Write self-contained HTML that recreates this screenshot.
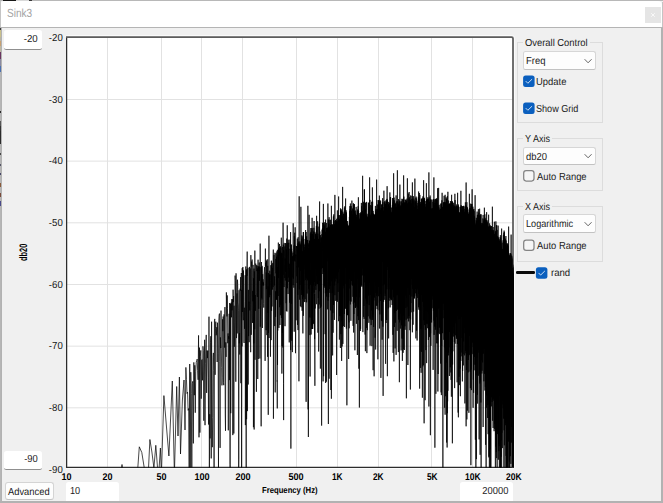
<!DOCTYPE html>
<html lang="en"><head><meta charset="utf-8"><title>Sink3</title><style>
html,body{margin:0;padding:0}
body{width:663px;height:503px;overflow:hidden;background:#f0f0f0;position:relative;font-family:"Liberation Sans", Arial, sans-serif}
.b{position:absolute;display:block}
.t{position:absolute;display:inline-block;white-space:nowrap;font-family:"Liberation Sans", Arial, sans-serif}
.edit{position:absolute;box-sizing:border-box;background:#fff;border:0 solid #fff;border-bottom:1px solid #8f8f8f;border-radius:2.5px}
.combo{position:absolute;box-sizing:border-box;background:#fdfdfd;border:1px solid #d6d6d6;border-bottom-color:#c2c2c2;border-radius:2.5px}
.btn{position:absolute;box-sizing:border-box;background:#fdfdfd;border:1px solid #d4d4d4;border-bottom-color:#c4c4c4;border-radius:3px}
.gb{position:absolute;box-sizing:border-box;border:1px solid #dcdcdc}
</style></head><body>
<div class="sec" id="window-frame">
<div class="b" style="left:0px;top:0px;width:663px;height:1px;background:#b8b8b8"></div>
<div class="b" style="left:3px;top:0px;width:13px;height:1px;background:#161616"></div>
<div class="b" style="left:16px;top:0px;width:13px;height:1px;background:#d9d9d9"></div>
<div class="b" style="left:29px;top:0px;width:3px;height:1px;background:#3a3a3a"></div>
<div class="b" style="left:1px;top:1px;width:661px;height:26px;background:#fff;border-radius:3px 4px 0 0"></div>
<div class="b" style="left:0px;top:27px;width:663px;height:1px;background:#b4b4b4"></div>
<div class="b" style="left:0px;top:1px;width:1px;height:26px;background:#c4c4c4"></div>
<div class="b" style="left:662px;top:2px;width:1px;height:25px;background:#c4c4c4"></div>
<div class="b" style="left:0px;top:28px;width:1px;height:475px;background:#b6b6b6"></div>
<div class="b" style="left:0px;top:28px;width:1px;height:2px;background:#3a3a3a"></div>
<div class="b" style="left:0px;top:30px;width:1px;height:7px;background:#c9c08a"></div>
<div class="b" style="left:0px;top:37px;width:1px;height:4px;background:#b9b4a4"></div>
<div class="b" style="left:0px;top:41px;width:1px;height:5px;background:#c8a070"></div>
<div class="b" style="left:0px;top:46px;width:1px;height:6px;background:#bdb6a0"></div>
<div class="b" style="left:0px;top:52px;width:1px;height:7px;background:#6a3560"></div>
<div class="b" style="left:0px;top:59px;width:1px;height:7px;background:#8a8aa0"></div>
<div class="b" style="left:0px;top:66px;width:1px;height:6px;background:#4a70b0"></div>
<div class="b" style="left:0px;top:111px;width:1px;height:2px;background:#2a2a2a"></div>
<div class="b" style="left:0px;top:121px;width:1px;height:5px;background:#555"></div>
<div class="b" style="left:0px;top:126px;width:1px;height:5px;background:#333"></div>
<div class="b" style="left:0px;top:131px;width:1px;height:13px;background:#2b2b2b"></div>
<div class="b" style="left:0px;top:153px;width:1px;height:2px;background:#444"></div>
<div class="b" style="left:0px;top:164px;width:1px;height:2px;background:#556"></div>
<div class="b" style="left:0px;top:173px;width:1px;height:2px;background:#446"></div>
<div class="b" style="left:0px;top:183px;width:1px;height:4px;background:#8a5a3a"></div>
<div class="b" style="left:0px;top:193px;width:1px;height:4px;background:#7a4a3a"></div>
<div class="b" style="left:0px;top:201px;width:1px;height:5px;background:#4a4a8a"></div>
<div class="b" style="left:1px;top:28px;width:1px;height:475px;background:#b2b2b2"></div>
<div class="b" style="left:661px;top:28px;width:2px;height:475px;background:#b2b2b2"></div>
<div class="b" style="left:0px;top:500.6px;width:663px;height:2.3999999999999773px;background:#b2b2b2;z-index:5"></div>
<span class="t" style="left:7.40px;top:8.40px;font-size:11.8px;line-height:11.8px;font-weight:400;color:#a3a3a3;transform-origin:0 0;transform:rotate(0.03deg) scaleX(0.8538);">Sink3</span>
<div class="b" style="left:645px;top:7px;width:16px;height:16px;background:#e5e5e5"></div>
<svg class="b" style="left:649px;top:11px" width="8" height="8" viewBox="0 0 8 8"><path d="M2.2 2.2 L5.8 5.8 M5.8 2.2 L2.2 5.8" stroke="#fafafa" stroke-width="0.9" fill="none"/></svg>
</div>
<div class="sec" id="range-controls">
<div class="edit" style="left:3.8px;top:30.2px;width:38.0px;height:19.8px"></div>
<span class="t" style="right:625.40px;top:33.70px;font-size:10.2px;line-height:10.2px;font-weight:400;color:#1b1b1b;transform-origin:100% 0;transform:rotate(0.03deg) scaleX(0.9502);">-20</span>
<div class="edit" style="left:3.8px;top:450.8px;width:38.0px;height:19.19999999999999px"></div>
<span class="t" style="right:625.60px;top:453.70px;font-size:10.2px;line-height:10.2px;font-weight:400;color:#1b1b1b;transform-origin:100% 0;transform:rotate(0.03deg) scaleX(0.9230);">-90</span>
<div class="btn" style="left:4.5px;top:482.2px;width:49.5px;height:18px"></div>
<span class="t" style="left:8.00px;top:486.70px;font-size:10.2px;line-height:10.2px;font-weight:400;color:#1b1b1b;transform-origin:0 0;transform:rotate(0.03deg) scaleX(0.9181);">Advanced</span>
<div class="edit" style="left:66.1px;top:481.8px;width:52.5px;height:21.19999999999999px"></div>
<span class="t" style="left:70.40px;top:485.70px;font-size:10.2px;line-height:10.2px;font-weight:400;color:#1b1b1b;transform-origin:0 0;transform:rotate(0.03deg) scaleX(0.8992);">10</span>
<div class="edit" style="left:460.4px;top:481.8px;width:52.80000000000007px;height:21.19999999999999px"></div>
<span class="t" style="right:154.40px;top:485.70px;font-size:10.2px;line-height:10.2px;font-weight:400;color:#1b1b1b;transform-origin:100% 0;transform:rotate(0.03deg) scaleX(0.9173);">20000</span>
</div>
<div class="sec" id="side-panel">
<div class="gb" style="left:517px;top:42px;width:86px;height:81px"></div><div class="b" style="left:523px;top:40px;width:66.6px;height:4px;background:#f0f0f0"></div><span class="t" style="left:524.60px;top:37.70px;font-size:10.2px;line-height:10.2px;font-weight:400;color:#1b1b1b;transform-origin:0 0;transform:rotate(0.03deg) scaleX(0.9212);">Overall Control</span>
<div class="combo" style="left:523.3px;top:51px;width:72.30000000000007px;height:19px"></div><span class="t" style="left:525.90px;top:55.70px;font-size:10.2px;line-height:10.2px;font-weight:400;color:#1b1b1b;transform-origin:0 0;transform:rotate(0.03deg) scaleX(0.9259);">Freq</span><svg class="b" style="left:583.3000000000001px;top:56.5px" width="10" height="8" viewBox="0 0 10 8"><path d="M1.9 2.5 L5.1 5.8 L8.3 2.5" fill="none" stroke="#666" stroke-width="1.0" stroke-linecap="round" stroke-linejoin="round"/></svg>
<svg class="b" style="left:522px;top:74px" width="15" height="15" viewBox="0 0 15 15"><rect x="1.10" y="1.50" width="11.5" height="11.5" rx="2.5" fill="#0a5fbe"/><path d="M4.00 7.40 L5.85 9.25 L9.80 5.40" fill="none" stroke="#d3e3f4" stroke-width="0.95" stroke-linecap="round" stroke-linejoin="round"/></svg>
<span class="t" style="left:536.00px;top:76.70px;font-size:10.2px;line-height:10.2px;font-weight:400;color:#1b1b1b;transform-origin:0 0;transform:rotate(0.03deg) scaleX(0.9252);">Update</span>
<svg class="b" style="left:522px;top:101px" width="15" height="15" viewBox="0 0 15 15"><rect x="1.10" y="1.50" width="11.5" height="11.5" rx="2.5" fill="#0a5fbe"/><path d="M4.00 7.40 L5.85 9.25 L9.80 5.40" fill="none" stroke="#d3e3f4" stroke-width="0.95" stroke-linecap="round" stroke-linejoin="round"/></svg>
<span class="t" style="left:536.00px;top:103.70px;font-size:10.2px;line-height:10.2px;font-weight:400;color:#1b1b1b;transform-origin:0 0;transform:rotate(0.03deg) scaleX(0.8915);">Show Grid</span>
<div class="gb" style="left:517px;top:138px;width:86px;height:53px"></div><div class="b" style="left:523px;top:136px;width:29.0px;height:4px;background:#f0f0f0"></div><span class="t" style="left:524.60px;top:133.70px;font-size:10.2px;line-height:10.2px;font-weight:400;color:#1b1b1b;transform-origin:0 0;transform:rotate(0.03deg) scaleX(0.8889);">Y Axis</span>
<div class="combo" style="left:523.3px;top:147px;width:72.30000000000007px;height:18px"></div><span class="t" style="left:525.90px;top:151.70px;font-size:10.2px;line-height:10.2px;font-weight:400;color:#1b1b1b;transform-origin:0 0;transform:rotate(0.03deg) scaleX(0.9263);">db20</span><svg class="b" style="left:583.3000000000001px;top:152.0px" width="10" height="8" viewBox="0 0 10 8"><path d="M1.9 2.5 L5.1 5.8 L8.3 2.5" fill="none" stroke="#666" stroke-width="1.0" stroke-linecap="round" stroke-linejoin="round"/></svg>
<svg class="b" style="left:522px;top:169px" width="15" height="15" viewBox="0 0 15 15"><rect x="1.70" y="1.70" width="10.3" height="10.3" rx="2.4" fill="#f6f6f6" stroke="#848484" stroke-width="1.25"/></svg>
<span class="t" style="left:536.70px;top:171.70px;font-size:10.2px;line-height:10.2px;font-weight:400;color:#1b1b1b;transform-origin:0 0;transform:rotate(0.03deg) scaleX(0.9217);">Auto Range</span>
<div class="gb" style="left:517px;top:206px;width:86px;height:56px"></div><div class="b" style="left:523px;top:204px;width:29.0px;height:4px;background:#f0f0f0"></div><span class="t" style="left:524.60px;top:201.70px;font-size:10.2px;line-height:10.2px;font-weight:400;color:#1b1b1b;transform-origin:0 0;transform:rotate(0.03deg) scaleX(0.8830);">X Axis</span>
<div class="combo" style="left:523.3px;top:214px;width:72.30000000000007px;height:19px"></div><span class="t" style="left:525.90px;top:218.70px;font-size:10.2px;line-height:10.2px;font-weight:400;color:#1b1b1b;transform-origin:0 0;transform:rotate(0.03deg) scaleX(0.8961);">Logarithmic</span><svg class="b" style="left:583.3000000000001px;top:219.5px" width="10" height="8" viewBox="0 0 10 8"><path d="M1.9 2.5 L5.1 5.8 L8.3 2.5" fill="none" stroke="#666" stroke-width="1.0" stroke-linecap="round" stroke-linejoin="round"/></svg>
<svg class="b" style="left:522px;top:238px" width="15" height="15" viewBox="0 0 15 15"><rect x="1.70" y="2.10" width="10.3" height="10.3" rx="2.4" fill="#f6f6f6" stroke="#848484" stroke-width="1.25"/></svg>
<span class="t" style="left:536.70px;top:240.70px;font-size:10.2px;line-height:10.2px;font-weight:400;color:#1b1b1b;transform-origin:0 0;transform:rotate(0.03deg) scaleX(0.9217);">Auto Range</span>
<div class="b" style="left:515.6px;top:271.2px;width:19.4px;height:2.6px;background:#0a0a0a;border-radius:1.3px"></div>
<svg class="b" style="left:534px;top:266px" width="15" height="15" viewBox="0 0 15 15"><rect x="1.90" y="1.30" width="11.5" height="11.5" rx="2.5" fill="#0a5fbe"/><path d="M4.80 7.20 L6.65 9.05 L10.60 5.20" fill="none" stroke="#d3e3f4" stroke-width="0.95" stroke-linecap="round" stroke-linejoin="round"/></svg>
<span class="t" style="left:551.00px;top:267.70px;font-size:10.2px;line-height:10.2px;font-weight:400;color:#1b1b1b;transform-origin:0 0;transform:rotate(0.03deg) scaleX(0.9416);">rand</span>
</div>
<div class="sec" id="plot">
<svg class="b" style="left:0;top:0" width="663" height="503" viewBox="0 0 663 503"><rect x="67" y="37" width="446" height="430" fill="#fff"/><path d="M107.5 37V467M161.5 37V467M201.5 37V467M242.5 37V467M296.5 37V467M337.5 37V467M378.5 37V467M431.5 37V467M472.5 37V467M67 99.47H513M67 161.14H513M67 222.81H513M67 284.48H513M67 346.15H513M67 407.82H513" stroke="#e2e2e2" stroke-width="1" fill="none"/><rect x="65.5" y="35.5" width="449" height="433" rx="2" fill="none" stroke="#fafafa" stroke-width="1"/><path d="M66.6 37V467.3H513" fill="none" stroke="#2c2c2c" stroke-width="1.3"/><path d="M66 37H511.5Q513 37 513 38.5V468" fill="none" stroke="#5c5c5c" stroke-width="1.75"/><clipPath id="pc"><rect x="67.2" y="37.8" width="446.3" height="429.6"/></clipPath><g clip-path="url(#pc)"><path d="M60.00,475.0 120.50,475.0 122.00,464.5 123.50,475.0 137.30,475.0 139.30,446.8 141.80,452.5 144.60,470.0 146.20,475.0 148.20,475.0 149.90,439.5 151.90,452.0 153.90,468.0 155.80,445.3 157.70,470.0 159.00,470.0 160.40,448.0 161.40,475.0 163.90,395.6 168.90,456.0 172.30,381.0 174.40,475.0 176.70,386.5 178.00,436.0 179.40,377.0 180.50,454.0 182.40,400.0 184.00,380.0 185.00,430.0 185.89,367.4 186.46,379.6 187.01,393.5 187.57,392.2 188.11,410.4 188.65,408.5 189.19,475.0 189.72,364.0 190.25,475.0 190.77,372.2 191.29,393.5 191.81,475.0 192.31,383.7 192.82,381.3 193.32,443.4 193.82,362.4 194.31,395.2 194.80,365.3 195.28,412.7 195.76,371.7 196.24,362.2 196.71,360.7 197.18,359.1 197.64,370.4 198.10,379.8 198.56,335.4 199.01,437.3 199.47,347.6 199.91,432.6 200.36,356.2 200.80,350.4 201.23,398.7 201.67,360.0 202.10,359.5 202.53,380.3 202.95,346.3 203.37,350.7 203.79,420.7 204.21,378.9 204.62,339.8 205.03,425.2 205.44,363.9 205.84,346.0 206.24,334.9 206.64,392.9 207.04,350.5 207.43,358.1 207.82,350.7 208.21,377.2 208.59,424.5 208.98,316.7 209.36,475.0 209.74,414.2 210.11,438.4 210.49,342.2 210.86,336.2 211.22,458.4 211.59,321.7 211.96,418.7 212.32,447.2 212.68,417.5 213.03,357.5 213.39,352.9 213.74,370.6 214.09,475.0 214.44,320.9 214.79,318.9 215.13,374.8 215.48,328.7 215.82,321.7 216.16,335.3 216.49,333.0 216.83,327.2 217.16,362.0 217.49,322.7 217.82,332.2 218.15,353.8 218.48,473.0 218.80,320.2 219.12,315.1 219.44,313.6 219.76,361.5 220.08,447.9 220.39,337.4 220.71,348.1 221.02,310.6 221.33,348.9 221.64,367.3 221.95,385.4 222.25,377.9 222.56,319.3 222.86,331.2 223.16,316.5 223.46,382.5 223.76,385.2 224.05,314.4 224.35,338.6 224.64,347.6 224.93,307.1 225.22,413.9 225.51,430.8 225.80,342.3 226.08,356.9 226.37,292.4 226.65,307.2 226.93,316.4 227.22,295.4 227.49,308.4 227.77,343.2 228.05,333.4 228.32,430.3 228.60,336.2 228.87,338.9 229.14,313.8 229.41,380.1 229.68,303.0 229.95,464.6 230.22,475.0 230.48,303.7 230.75,413.2 231.01,317.9 231.27,302.6 231.53,317.3 231.79,299.1 232.05,310.3 232.31,305.1 232.56,299.2 232.82,435.1 233.07,289.7 233.33,302.1 233.58,296.1 233.83,433.5 234.08,305.7 234.33,346.7 234.58,336.1 234.82,322.2 235.07,275.6 235.31,280.4 235.56,294.0 235.80,381.7 236.04,273.3 236.28,279.7 236.52,338.1 236.76,328.2 237.00,293.4 237.23,333.4 237.47,279.7 237.70,284.4 237.94,303.0 238.17,304.3 238.40,310.8 238.63,475.0 238.86,459.8 239.09,290.2 239.32,343.3 239.55,333.1 239.77,354.5 240.00,288.8 240.22,289.2 240.45,290.6 240.67,277.1 240.89,383.2 241.12,285.6 241.34,273.0 241.56,475.0 241.78,289.9 241.99,346.5 242.21,268.2 242.43,278.1 242.64,312.0 242.86,267.0 243.07,316.5 243.29,320.2 243.50,270.5 243.71,309.9 243.92,341.9 244.13,343.0 244.34,307.7 244.55,328.8 244.76,318.0 244.97,301.7 245.17,275.2 245.38,425.1 245.58,343.2 245.79,266.5 245.99,390.0 246.20,475.0 246.40,270.1 246.60,419.2 246.80,269.1 247.00,275.8 247.20,251.6 247.40,411.1 247.60,340.7 247.80,333.9 247.99,267.7 248.19,384.5 248.38,289.9 248.58,336.1 248.77,327.5 248.97,301.7 249.16,342.2 249.35,295.1 249.55,266.9 249.74,310.4 249.93,291.4 250.12,268.4 250.31,269.9 250.50,304.1 250.68,352.2 250.87,255.1 251.06,274.2 251.24,334.8 251.43,310.9 251.62,261.6 251.80,266.5 251.98,260.6 252.17,259.6 252.35,276.9 252.53,322.9 252.71,290.9 252.90,301.3 253.08,264.9 253.26,292.8 253.44,427.2 253.62,278.3 253.79,343.4 253.97,268.6 254.15,429.5 254.33,271.4 254.50,287.4 254.68,329.1 254.85,250.6 255.03,359.8 255.20,295.0 255.38,309.9 255.55,310.7 255.72,263.6 255.89,266.2 256.07,266.2 256.24,344.8 256.41,391.8 256.58,292.1 256.75,265.0 256.92,271.1 257.09,266.1 257.25,294.9 257.42,296.9 257.59,268.3 257.76,379.0 257.92,268.4 258.09,259.7 258.25,359.0 258.42,266.9 258.58,274.6 258.75,308.8 258.91,266.0 259.07,271.0 259.24,262.5 259.40,280.8 259.56,267.7 259.72,267.0 259.88,358.5 260.04,336.1 260.20,243.6 260.36,326.7 260.52,309.7 260.68,305.7 260.84,302.9 261.00,267.4 261.15,426.3 261.31,267.0 261.47,262.0 261.62,297.8 261.78,267.1 261.93,299.5 262.09,265.8 262.24,317.1 262.40,328.0 262.55,284.9 262.71,274.2 262.86,285.3 263.01,279.3 263.16,280.6 263.31,285.6 263.47,282.4 263.62,303.4 263.77,307.6 263.92,296.0 264.07,274.1 264.22,272.0 264.37,270.0 264.51,267.9 264.66,267.1 264.81,279.4 264.96,286.4 265.11,360.9 265.25,262.9 265.40,248.6 265.55,266.4 265.69,266.7 265.84,262.6 265.98,314.7 266.13,330.2 266.27,272.5 266.41,289.1 266.56,260.5 266.70,321.6 266.84,335.1 266.99,299.6 267.13,272.2 267.27,259.3 267.41,341.5 267.55,356.8 267.69,265.8 267.83,290.9 267.97,312.9 268.11,286.3 268.25,414.8 268.39,273.0 268.53,332.9 268.67,316.7 268.81,284.4 268.95,235.7 269.08,338.0 269.22,278.5 269.36,276.5 269.50,274.6 269.63,297.2 269.77,270.7 269.90,294.9 270.04,282.3 270.17,274.4 270.31,318.1 270.44,356.7 270.58,325.8 270.71,280.5 270.84,265.2 270.98,301.2 271.11,340.1 271.24,308.4 271.37,260.7 271.51,310.7 271.64,310.8 271.77,264.4 271.90,284.2 272.03,306.5 272.16,276.5 272.29,267.8 272.42,289.6 272.55,265.4 272.68,264.1 272.81,262.9 272.94,285.3 273.07,287.1 273.20,259.2 273.32,249.6 273.45,418.7 273.58,290.1 273.71,266.0 273.83,260.8 273.96,254.9 274.09,276.7 274.21,277.6 274.34,285.5 274.46,285.4 274.59,276.3 274.71,326.1 274.84,271.7 274.96,252.8 275.09,278.5 275.21,392.4 275.33,315.5 275.46,291.3 275.58,316.9 275.70,305.0 275.83,258.9 275.95,273.3 276.07,253.3 276.19,276.5 276.31,299.8 276.44,291.8 276.56,256.8 276.68,299.5 276.80,254.3 276.92,251.4 277.04,381.3 277.16,380.7 277.28,408.4 277.40,249.8 277.52,364.9 277.64,267.1 277.76,330.6 277.87,292.0 277.99,254.9 278.11,264.0 278.23,296.0 278.34,242.6 278.46,249.5 278.58,278.0 278.70,248.5 278.81,292.9 278.93,327.9 279.05,273.5 279.16,252.5 279.28,247.4 279.39,255.5 279.51,244.0 279.62,307.2 279.74,292.8 279.85,252.6 279.97,325.0 280.08,286.6 280.19,269.5 280.31,251.5 280.42,315.2 280.53,246.3 280.65,249.8 280.76,282.6 280.87,247.7 280.98,304.9 281.10,257.0 281.21,254.3 281.32,237.7 281.43,318.0 281.54,275.2 281.65,252.8 281.76,286.6 281.88,373.6 281.99,253.3 282.10,346.1 282.21,303.1 282.32,258.0 282.43,332.9 282.53,246.9 282.64,250.2 282.75,268.4 282.86,347.5 282.97,258.3 283.08,222.7 283.19,274.8 283.30,244.6 283.40,301.9 283.51,383.5 283.62,420.1 283.73,252.2 283.83,250.1 283.94,258.0 284.05,287.0 284.15,242.9 284.26,245.1 284.36,250.3 284.47,251.9 284.58,256.2 284.68,277.9 284.79,263.3 284.89,246.5 285.00,326.2 285.10,278.7 285.21,258.6 285.31,280.5 285.41,265.2 285.52,272.0 285.62,262.6 285.73,243.0 285.83,270.5 285.93,243.4 286.04,292.8 286.14,303.2 286.24,273.4 286.34,311.0 286.45,249.4 286.55,288.5 286.65,281.4 286.75,238.6 286.85,268.6 286.96,311.6 287.06,248.1 287.16,243.4 287.26,225.3 287.36,252.8 287.46,284.1 287.56,288.2 287.66,267.4 287.76,242.9 287.86,243.3 287.96,282.4 288.06,294.0 288.16,258.2 288.26,239.7 288.36,277.6 288.46,255.2 288.56,248.1 288.65,246.1 288.75,242.8 288.85,281.9 288.95,274.9 289.05,248.9 289.14,278.6 289.24,342.4 289.34,292.4 289.44,263.8 289.53,270.4 289.63,302.7 289.73,274.6 289.82,247.6 289.92,239.6 290.02,247.6 290.11,300.4 290.21,299.1 290.30,268.7 290.40,283.6 290.50,339.8 290.59,232.1 290.69,350.1 290.78,249.0 290.88,448.6 290.97,249.4 291.07,244.2 291.16,268.8 291.25,273.2 291.35,245.1 291.44,303.8 291.54,252.2 291.63,248.8 291.72,340.7 291.82,251.3 291.91,252.6 292.00,277.4 292.10,271.5 292.19,256.3 292.28,257.5 292.38,352.1 292.47,260.0 292.56,258.8 292.65,257.6 292.74,256.4 292.84,260.9 292.93,254.0 293.02,252.7 293.11,285.2 293.20,223.3 293.29,249.1 293.38,267.0 293.47,278.6 293.56,265.0 293.66,255.3 293.75,261.4 293.84,287.7 293.93,284.9 294.02,248.1 294.11,245.4 294.20,331.7 294.29,283.3 294.37,236.2 294.46,238.8 294.55,260.6 294.64,234.1 294.73,232.7 294.82,257.9 294.91,247.2 295.00,245.6 295.09,261.6 295.17,227.3 295.26,247.5 295.35,248.9 295.44,250.7 295.53,353.2 295.61,323.0 295.70,254.4 295.79,255.8 295.87,255.0 295.96,272.4 296.05,272.5 296.14,320.3 296.22,267.8 296.31,248.2 296.40,246.8 296.48,247.6 296.57,246.1 296.65,267.3 296.74,266.7 296.83,276.3 296.91,246.2 297.00,246.0 297.08,283.0 297.17,268.9 297.25,246.7 297.34,238.6 297.42,250.5 297.51,324.9 297.59,289.4 297.68,246.6 297.76,254.0 297.84,294.8 297.93,243.2 298.01,330.1 298.10,238.5 298.18,237.2 298.26,251.9 298.35,257.7 298.43,244.2 298.52,267.4 298.60,241.9 298.68,241.6 298.76,242.5 298.85,245.3 298.93,381.3 299.01,246.2 299.10,246.1 299.18,196.3 299.26,289.5 299.34,257.7 299.42,254.6 299.51,244.1 299.59,247.3 299.67,299.7 299.75,241.5 299.83,242.0 299.91,270.9 300.00,285.0 300.12,243.5 300.12,243.5 300.12,263.7 300.12,253.0 300.38,244.9 300.38,244.9 300.38,306.2 300.38,245.8 300.62,248.4 300.62,244.9 300.62,270.8 300.62,270.8 300.88,244.0 300.88,244.0 300.88,206.8 300.88,206.8 301.12,242.6 301.12,242.6 301.12,307.2 301.12,281.4 301.38,241.2 301.38,241.2 301.38,294.9 301.38,294.9 301.62,286.3 301.62,286.3 301.62,238.8 301.62,238.8 301.88,289.8 301.88,289.8 301.88,235.3 301.88,235.3 302.12,283.1 302.12,310.8 302.12,236.4 302.12,236.4 302.38,242.2 302.38,242.2 302.38,280.4 302.38,280.4 302.62,298.8 302.62,298.8 302.62,251.3 302.62,293.0 302.88,333.4 302.88,333.4 302.88,276.4 302.88,280.7 303.12,257.5 303.12,257.5 303.12,237.9 303.12,245.1 303.38,248.0 303.38,232.1 303.38,315.8 303.38,232.1 303.62,296.6 303.62,296.6 303.62,242.4 303.62,274.3 303.88,239.0 303.88,239.0 303.88,269.4 303.88,253.7 304.12,275.2 304.12,301.8 304.12,247.1 304.12,247.1 304.38,264.8 304.38,264.8 304.38,251.2 304.38,251.2 304.62,253.2 304.62,253.2 304.62,250.1 304.62,250.1 304.88,274.4 304.88,302.1 304.88,244.8 304.88,244.8 305.12,299.1 305.12,299.1 305.12,243.8 305.12,243.8 305.38,280.1 305.38,280.1 305.38,235.5 305.38,235.5 305.62,230.0 305.62,230.0 305.62,244.5 305.62,244.5 305.88,240.9 305.88,232.0 305.88,277.2 305.88,232.0 306.12,401.8 306.12,401.8 306.12,244.6 306.12,244.6 306.38,241.2 306.38,237.8 306.38,263.0 306.38,263.0 306.62,236.9 306.62,236.3 306.62,302.3 306.62,302.3 306.88,286.8 306.88,286.8 306.88,243.9 306.88,278.6 307.12,258.5 307.12,242.2 307.12,293.5 307.12,242.2 307.38,280.3 307.38,280.3 307.38,239.9 307.38,239.9 307.62,240.7 307.62,240.2 307.62,257.9 307.62,240.2 307.88,243.9 307.88,251.2 307.88,205.8 307.88,251.2 308.12,249.4 308.12,243.3 308.12,409.4 308.12,244.5 308.38,253.2 308.38,248.1 308.38,437.0 308.38,248.1 308.62,249.3 308.62,249.3 308.62,288.6 308.62,276.2 308.88,253.4 308.88,253.4 308.88,286.0 308.88,270.8 309.12,279.5 309.12,279.5 309.12,214.8 309.12,246.3 309.38,245.2 309.38,242.9 309.38,317.4 309.38,289.1 309.62,240.9 309.62,240.9 309.62,290.7 309.62,290.7 309.88,335.1 309.88,335.1 309.88,240.7 309.88,243.0 310.12,376.5 310.12,376.5 310.12,240.9 310.12,245.0 310.38,233.7 310.38,233.4 310.38,262.8 310.38,240.3 310.62,241.0 310.62,241.0 310.62,284.7 310.62,284.7 310.88,231.8 310.88,231.8 310.88,317.7 310.88,317.7 311.12,267.6 311.12,228.1 311.12,334.5 311.12,228.1 311.38,261.0 311.38,261.0 311.38,236.9 311.38,236.9 311.62,240.4 311.62,234.3 311.62,329.0 311.62,234.3 311.88,268.9 311.88,268.9 311.88,325.2 311.88,292.6 312.12,232.5 312.12,217.8 312.12,268.3 312.12,268.3 312.38,228.2 312.38,228.2 312.38,278.6 312.38,255.8 312.62,281.6 312.62,328.9 312.62,234.0 312.62,328.9 312.88,320.2 312.88,323.4 312.88,234.5 312.88,323.4 313.12,296.5 313.12,296.5 313.12,236.9 313.12,269.6 313.38,285.3 313.38,285.3 313.38,237.0 313.38,237.0 313.62,237.0 313.62,231.5 313.62,287.7 313.62,287.7 313.88,309.2 313.88,324.1 313.88,227.8 313.88,240.9 314.12,221.0 314.12,221.0 314.12,292.7 314.12,247.1 314.38,243.9 314.38,239.1 314.38,270.6 314.38,239.1 314.62,281.8 314.62,267.3 314.62,339.2 314.62,293.9 314.88,385.8 314.88,385.8 314.88,231.9 314.88,231.9 315.12,239.6 315.12,238.8 315.12,308.5 315.12,308.5 315.38,277.8 315.38,277.8 315.38,240.9 315.38,248.7 315.62,233.6 315.62,233.6 315.62,285.9 315.62,285.9 315.88,241.4 315.88,234.2 315.88,289.9 315.88,289.9 316.12,243.1 316.12,243.1 316.12,262.4 316.12,244.6 316.38,225.9 316.38,225.9 316.38,268.6 316.38,255.8 316.62,215.8 316.62,215.8 316.62,304.2 316.62,304.2 316.88,238.5 316.88,238.5 316.88,284.2 316.88,284.2 317.12,236.4 317.12,236.4 317.12,275.9 317.12,275.9 317.38,239.8 317.38,237.0 317.38,282.3 317.38,237.0 317.62,274.5 317.62,284.1 317.62,221.3 317.62,284.1 317.88,327.6 317.88,332.7 317.88,233.6 317.88,233.6 318.12,274.9 318.12,274.9 318.12,226.6 318.12,226.6 318.38,297.7 318.38,298.0 318.38,239.1 318.38,275.3 318.62,241.4 318.62,241.4 318.62,351.5 318.62,351.5 318.88,323.2 318.88,323.2 318.88,247.9 318.88,308.7 319.12,238.8 319.12,238.8 319.12,277.3 319.12,269.4 319.38,223.6 319.38,223.6 319.38,291.2 319.38,229.9 319.62,201.5 319.62,201.5 319.62,281.0 319.62,259.9 319.88,231.5 319.88,231.5 319.88,304.4 319.88,279.3 320.12,262.7 320.12,262.7 320.12,235.2 320.12,236.7 320.38,235.3 320.38,235.3 320.38,368.6 320.38,303.8 320.62,308.0 320.62,308.0 320.62,237.4 320.62,238.5 320.88,306.3 320.88,306.3 320.88,242.9 320.88,264.9 321.12,306.5 321.12,306.5 321.12,264.5 321.12,269.2 321.38,246.3 321.38,244.1 321.38,249.5 321.38,249.5 321.62,241.9 321.62,237.5 321.62,425.6 321.62,237.5 321.88,268.3 321.88,268.3 321.88,234.2 321.88,237.4 322.12,236.8 322.12,229.8 322.12,265.4 322.12,265.4 322.38,267.8 322.38,267.8 322.38,228.7 322.38,239.9 322.62,224.8 322.62,222.8 322.62,235.5 322.62,234.1 322.88,261.7 322.88,274.0 322.88,235.7 322.88,235.7 323.12,228.0 323.12,228.0 323.12,381.4 323.12,307.5 323.38,228.4 323.38,203.9 323.38,271.5 323.38,222.9 323.62,376.2 323.62,376.2 323.62,236.4 323.62,241.7 323.88,271.8 323.88,271.8 323.88,223.3 323.88,262.1 324.12,223.3 324.12,223.3 324.12,266.2 324.12,248.2 324.38,242.9 324.38,232.4 324.38,286.3 324.38,286.3 324.62,272.4 324.62,272.4 324.62,225.5 324.62,246.2 324.88,287.8 324.88,287.8 324.88,222.0 324.88,222.0 325.12,223.2 325.12,223.2 325.12,334.2 325.12,250.6 325.38,236.9 325.38,231.8 325.38,293.2 325.38,293.2 325.62,230.9 325.62,219.6 325.62,383.0 325.62,383.0 325.88,248.1 325.88,234.9 325.88,291.8 325.88,288.4 326.12,232.9 326.12,232.0 326.12,275.6 326.12,275.6 326.38,381.7 326.38,381.7 326.38,234.2 326.38,241.3 326.62,251.3 326.62,223.0 326.62,296.6 326.62,228.5 326.88,292.9 326.88,292.9 326.88,228.0 326.88,229.3 327.12,258.6 327.12,261.4 327.12,227.9 327.12,243.2 327.38,281.7 327.38,309.3 327.38,229.1 327.38,230.2 327.62,230.8 327.62,230.8 327.62,254.1 327.62,245.3 327.88,257.8 327.88,257.8 327.88,203.5 327.88,234.9 328.12,226.8 328.12,226.8 328.12,300.8 328.12,232.6 328.38,424.0 328.38,424.0 328.38,219.5 328.38,255.3 328.62,228.5 328.62,226.0 328.62,297.2 328.62,226.0 328.88,233.5 328.88,223.8 328.88,243.4 328.88,235.0 329.12,378.7 329.12,378.7 329.12,217.2 329.12,231.5 329.38,231.4 329.38,227.6 329.38,288.9 329.38,229.3 329.62,236.5 329.62,231.4 329.62,242.0 329.62,240.9 329.88,230.9 329.88,229.0 329.88,292.9 329.88,230.9 330.12,244.2 330.12,219.8 330.12,283.7 330.12,219.8 330.38,241.9 330.38,227.6 330.38,285.5 330.38,241.5 330.62,229.6 330.62,225.4 330.62,310.4 330.62,225.4 330.88,231.4 330.88,231.4 330.88,390.0 330.88,390.0 331.12,247.7 331.12,227.1 331.12,281.3 331.12,227.1 331.38,266.2 331.38,205.8 331.38,398.7 331.38,231.4 331.62,224.8 331.62,224.4 331.62,272.9 331.62,272.9 331.88,272.1 331.88,272.1 331.88,228.4 331.88,241.2 332.12,245.0 332.12,224.4 332.12,293.3 332.12,224.4 332.38,237.8 332.38,237.8 332.38,303.8 332.38,303.8 332.62,355.4 332.62,355.4 332.62,225.2 332.62,244.3 332.88,313.1 332.88,313.1 332.88,228.5 332.88,229.5 333.12,275.0 333.12,226.6 333.12,332.7 333.12,328.7 333.38,250.5 333.38,277.8 333.38,216.4 333.38,221.8 333.62,304.9 333.62,304.9 333.62,215.0 333.62,215.0 333.88,214.3 333.88,214.3 333.88,265.0 333.88,233.5 334.12,243.3 334.12,247.2 334.12,220.9 334.12,236.1 334.38,301.2 334.38,319.9 334.38,227.2 334.38,243.1 334.62,227.8 334.62,224.2 334.62,285.5 334.62,231.8 334.88,281.0 334.88,295.2 334.88,194.9 334.88,269.8 335.12,248.0 335.12,226.4 335.12,281.4 335.12,226.4 335.38,269.9 335.38,277.3 335.38,224.2 335.38,236.2 335.62,258.4 335.62,220.2 335.62,300.8 335.62,220.2 335.88,257.6 335.88,260.3 335.88,226.7 335.88,246.8 336.12,242.6 336.12,222.6 336.12,278.7 336.12,223.6 336.38,228.1 336.38,221.1 336.38,253.0 336.38,253.0 336.62,226.8 336.62,218.8 336.62,375.0 336.62,375.0 336.88,237.6 336.88,232.5 336.88,300.5 336.88,251.0 337.12,268.3 337.12,275.4 337.12,222.0 337.12,257.9 337.38,226.3 337.38,210.4 337.38,301.8 337.38,294.9 337.62,249.6 337.62,249.6 337.62,221.4 337.62,235.7 337.88,228.2 337.88,227.1 337.88,283.1 337.88,230.5 338.12,239.7 338.12,217.8 338.12,291.9 338.12,279.8 338.38,251.7 338.38,271.7 338.38,215.1 338.38,266.4 338.62,196.5 338.62,196.5 338.62,321.2 338.62,230.7 338.88,260.6 338.88,260.6 338.88,224.2 338.88,250.3 339.12,269.1 339.12,269.1 339.12,220.3 339.12,246.5 339.38,223.1 339.38,222.0 339.38,339.6 339.38,339.6 339.62,274.8 339.62,274.8 339.62,218.8 339.62,218.8 339.88,232.0 339.88,215.2 339.88,316.1 339.88,215.2 340.12,260.4 340.12,227.1 340.12,316.1 340.12,316.1 340.38,227.1 340.38,227.1 340.38,348.0 340.38,348.0 340.62,226.8 340.62,208.3 340.62,277.7 340.62,237.8 340.88,276.8 340.88,334.1 340.88,209.6 340.88,222.8 341.12,225.0 341.12,209.3 341.12,283.7 341.12,283.7 341.38,232.0 341.38,210.9 341.38,321.2 341.38,210.9 341.62,268.2 341.62,224.1 341.62,360.9 341.62,226.5 341.88,270.4 341.88,291.7 341.88,215.4 341.88,215.4 342.12,215.8 342.12,215.8 342.12,346.5 342.12,234.4 342.38,221.7 342.38,216.4 342.38,327.2 342.38,216.4 342.62,248.9 342.62,285.9 342.62,186.9 342.62,285.9 342.88,254.2 342.88,211.7 342.88,343.9 342.88,343.9 343.12,231.3 343.12,223.9 343.12,258.8 343.12,223.9 343.38,275.3 343.38,236.9 343.38,326.1 343.38,283.4 343.62,254.1 343.62,285.3 343.62,213.7 343.62,226.9 343.88,226.3 343.88,213.9 343.88,278.4 343.88,278.4 344.12,218.0 344.12,218.0 344.12,288.5 344.12,284.2 344.38,207.5 344.38,207.5 344.38,314.0 344.38,266.4 344.62,238.3 344.62,217.5 344.62,327.0 344.62,327.0 344.88,221.4 344.88,206.2 344.88,307.9 344.88,251.1 345.12,215.4 345.12,214.3 345.12,283.9 345.12,225.5 345.38,225.5 345.38,221.5 345.38,308.8 345.38,224.0 345.62,198.5 345.62,198.5 345.62,252.1 345.62,235.7 345.88,223.6 345.88,218.9 345.88,267.6 345.88,251.0 346.12,226.5 346.12,210.3 346.12,252.8 346.12,226.3 346.38,225.5 346.38,212.6 346.38,328.6 346.38,212.6 346.62,216.8 346.62,216.8 346.62,315.2 346.62,222.5 346.88,255.9 346.88,234.1 346.88,405.3 346.88,257.6 347.12,244.0 347.12,224.2 347.12,309.1 347.12,224.2 347.38,285.9 347.38,314.7 347.38,232.4 347.38,314.7 347.62,221.0 347.62,221.0 347.62,315.2 347.62,265.1 347.88,231.7 347.88,225.9 347.88,282.8 347.88,248.6 348.12,302.6 348.12,302.6 348.12,225.6 348.12,225.9 348.38,225.7 348.38,225.6 348.38,238.3 348.38,226.7 348.62,226.4 348.62,226.4 348.62,359.0 348.62,236.1 348.88,256.4 348.88,227.0 348.88,322.4 348.88,264.3 349.12,239.8 349.12,226.3 349.12,328.3 349.12,245.6 349.38,222.4 349.38,217.0 349.38,247.8 349.38,223.5 349.62,257.8 349.62,278.6 349.62,211.1 349.62,237.8 349.88,248.8 349.88,288.5 349.88,206.1 349.88,206.1 350.12,250.3 350.12,209.2 350.12,300.7 350.12,269.2 350.38,230.1 350.38,203.5 350.38,304.4 350.38,222.2 350.62,225.0 350.62,215.3 350.62,279.6 350.62,220.4 350.88,240.5 350.88,206.2 350.88,320.8 350.88,206.2 351.12,227.7 351.12,211.2 351.12,301.6 351.12,225.3 351.38,226.2 351.38,214.5 351.38,274.3 351.38,214.5 351.62,276.5 351.62,281.0 351.62,210.7 351.62,235.1 351.88,265.9 351.88,270.9 351.88,200.6 351.88,224.5 352.12,284.5 352.12,284.5 352.12,214.3 352.12,267.7 352.38,285.6 352.38,285.6 352.38,217.5 352.38,243.2 352.62,251.3 352.62,269.8 352.62,208.5 352.62,208.5 352.88,232.0 352.88,223.3 352.88,296.8 352.88,283.0 353.12,215.5 353.12,209.6 353.12,325.9 353.12,209.6 353.38,203.2 353.38,203.2 353.38,303.9 353.38,261.3 353.62,220.8 353.62,212.1 353.62,332.5 353.62,249.3 353.88,227.5 353.88,204.6 353.88,314.0 353.88,220.3 354.12,210.5 354.12,204.1 354.12,265.0 354.12,204.1 354.38,242.7 354.38,252.3 354.38,211.6 354.38,221.6 354.62,269.7 354.62,302.5 354.62,213.8 354.62,261.9 354.88,221.3 354.88,221.3 354.88,350.3 354.88,271.6 355.12,218.8 355.12,214.2 355.12,271.2 355.12,214.2 355.38,289.7 355.38,307.8 355.38,210.5 355.38,307.8 355.62,258.8 355.62,280.8 355.62,213.6 355.62,229.0 355.88,287.3 355.88,306.6 355.88,218.9 355.88,306.6 356.12,259.1 356.12,296.9 356.12,206.9 356.12,216.8 356.38,222.6 356.38,214.9 356.38,323.8 356.38,269.1 356.62,222.3 356.62,217.1 356.62,252.6 356.62,219.7 356.88,264.2 356.88,268.4 356.88,220.7 356.88,268.4 357.12,231.7 357.12,218.6 357.12,279.0 357.12,264.5 357.38,248.4 357.38,210.7 357.38,355.0 357.38,331.1 357.62,210.7 357.62,210.7 357.62,277.0 357.62,253.6 357.88,244.7 357.88,209.3 357.88,316.2 357.88,316.2 358.12,206.3 358.12,206.3 358.12,307.5 358.12,222.5 358.38,225.5 358.38,197.3 358.38,283.7 358.38,239.8 358.62,228.2 358.62,210.7 358.62,320.1 358.62,290.8 358.88,217.7 358.88,217.7 358.88,368.7 358.88,221.1 359.12,291.5 359.12,297.5 359.12,224.4 359.12,224.4 359.38,234.7 359.38,232.3 359.38,407.5 359.38,268.4 359.62,243.6 359.62,219.3 359.62,270.1 359.62,229.2 359.88,292.8 359.88,292.8 359.88,213.0 359.88,237.6 360.12,223.9 360.12,214.5 360.12,292.1 360.12,275.5 360.38,258.1 360.38,219.6 360.38,331.0 360.38,226.6 360.62,217.2 360.62,212.4 360.62,328.8 360.62,221.9 360.88,222.1 360.88,214.3 360.88,251.2 360.88,214.3 361.12,220.6 361.12,214.7 361.12,284.7 361.12,231.2 361.38,231.6 361.38,202.9 361.38,270.3 361.38,270.3 361.62,213.7 361.62,206.2 361.62,285.7 361.62,223.2 361.88,214.6 361.88,211.8 361.88,286.8 361.88,222.0 362.12,234.5 362.12,221.2 362.12,268.3 362.12,254.4 362.38,211.0 362.38,211.0 362.38,275.4 362.38,245.4 362.62,175.8 362.62,175.8 362.62,268.1 362.62,268.1 362.88,219.4 362.88,219.4 362.88,332.1 362.88,309.9 363.12,276.5 363.12,276.5 363.12,213.5 363.12,213.5 363.38,225.6 363.38,201.8 363.38,289.1 363.38,217.4 363.62,219.5 363.62,219.5 363.62,316.9 363.62,260.1 363.88,220.6 363.88,203.0 363.88,306.0 363.88,246.7 364.12,293.7 364.12,318.9 364.12,220.6 364.12,255.8 364.38,212.8 364.38,189.5 364.38,256.9 364.38,189.5 364.62,275.4 364.62,275.4 364.62,211.7 364.62,230.7 364.88,240.3 364.88,208.9 364.88,282.4 364.88,230.3 365.12,214.4 365.12,214.3 365.12,334.6 365.12,251.3 365.38,220.9 365.38,209.1 365.38,351.2 365.38,267.8 365.62,298.4 365.62,298.4 365.62,202.6 365.62,212.2 365.88,203.1 365.88,203.1 365.88,293.7 365.88,226.2 366.12,256.8 366.12,256.8 366.12,215.1 366.12,215.1 366.38,270.8 366.38,300.5 366.38,218.2 366.38,218.2 366.62,279.9 366.62,327.9 366.62,201.9 366.62,220.4 366.88,214.6 366.88,213.7 366.88,353.1 366.88,285.1 367.12,268.8 367.12,303.7 367.12,217.4 367.12,277.9 367.38,217.9 367.38,216.6 367.38,330.2 367.38,218.7 367.62,219.2 367.62,219.2 367.62,265.0 367.62,251.5 367.88,254.3 367.88,223.4 367.88,285.7 367.88,262.9 368.12,214.3 368.12,214.3 368.12,316.3 368.12,218.1 368.38,248.5 368.38,274.0 368.38,202.8 368.38,221.7 368.62,217.2 368.62,217.2 368.62,295.6 368.62,232.7 368.88,297.2 368.88,322.8 368.88,202.6 368.88,281.4 369.12,231.2 369.12,206.7 369.12,305.1 369.12,245.9 369.38,243.3 369.38,215.7 369.38,282.8 369.38,217.1 369.62,214.1 369.62,177.4 369.62,273.2 369.62,245.4 369.88,199.9 369.88,199.9 369.88,318.6 369.88,220.5 370.12,251.0 370.12,215.5 370.12,345.7 370.12,215.5 370.38,219.8 370.38,216.9 370.38,294.6 370.38,219.4 370.62,295.1 370.62,295.1 370.62,205.1 370.62,205.1 370.88,220.0 370.88,215.8 370.88,319.7 370.88,234.9 371.12,257.3 371.12,213.7 371.12,325.1 371.12,232.8 371.38,263.3 371.38,280.2 371.38,218.1 371.38,218.2 371.62,222.5 371.62,201.8 371.62,310.5 371.62,270.4 371.88,206.5 371.88,205.8 371.88,346.1 371.88,226.9 372.12,219.1 372.12,210.1 372.12,284.9 372.12,219.4 372.38,301.7 372.38,319.9 372.38,187.4 372.38,187.4 372.62,271.7 372.62,271.7 372.62,201.6 372.62,218.3 372.88,241.4 372.88,216.0 372.88,317.3 372.88,273.0 373.12,370.2 373.12,370.2 373.12,210.9 373.12,248.5 373.38,270.3 373.38,314.8 373.38,213.5 373.38,234.6 373.62,258.8 373.62,214.7 373.62,327.0 373.62,214.7 373.88,234.1 373.88,215.3 373.88,300.5 373.88,244.5 374.12,243.8 374.12,214.3 374.12,376.3 374.12,254.0 374.38,214.9 374.38,214.9 374.38,297.6 374.38,245.9 374.62,273.1 374.62,281.4 374.62,214.8 374.62,257.3 374.88,221.0 374.88,215.1 374.88,261.5 374.88,255.8 375.12,224.1 375.12,216.8 375.12,337.7 375.12,337.7 375.38,328.7 375.38,328.7 375.38,205.9 375.38,245.0 375.62,244.1 375.62,211.3 375.62,349.5 375.62,259.5 375.88,248.8 375.88,209.2 375.88,292.8 375.88,216.1 376.12,258.3 376.12,285.8 376.12,217.9 376.12,231.3 376.38,243.1 376.38,266.0 376.38,212.3 376.38,240.9 376.62,295.9 376.62,295.9 376.62,179.6 376.62,263.1 376.88,261.8 376.88,305.7 376.88,209.5 376.88,305.7 377.12,217.6 377.12,214.8 377.12,309.2 377.12,217.8 377.38,232.1 377.38,220.0 377.38,293.3 377.38,220.0 377.62,248.6 377.62,275.0 377.62,204.5 377.62,213.8 377.88,224.5 377.88,209.0 377.88,359.3 377.88,209.0 378.12,236.4 378.12,267.2 378.12,200.0 378.12,238.8 378.38,256.5 378.38,296.2 378.38,216.0 378.38,230.4 378.62,244.4 378.62,286.8 378.62,201.4 378.62,242.2 378.88,214.6 378.88,200.1 378.88,244.1 378.88,244.1 379.12,282.5 379.12,310.3 379.12,206.8 379.12,206.8 379.38,219.5 379.38,195.6 379.38,302.6 379.38,302.6 379.62,214.3 379.62,213.6 379.62,328.5 379.62,230.3 379.88,214.8 379.88,201.6 379.88,314.4 379.88,209.8 380.12,252.8 380.12,269.3 380.12,210.0 380.12,238.4 380.38,239.7 380.38,216.5 380.38,293.5 380.38,293.5 380.62,215.4 380.62,200.5 380.62,301.0 380.62,218.1 380.88,285.7 380.88,216.0 380.88,377.9 380.88,377.9 381.12,220.1 381.12,208.1 381.12,284.7 381.12,217.3 381.38,214.6 381.38,211.4 381.38,320.5 381.38,259.2 381.62,229.6 381.62,208.0 381.62,313.2 381.62,261.2 381.88,234.9 381.88,204.7 381.88,321.1 381.88,204.7 382.12,260.8 382.12,204.0 382.12,339.7 382.12,227.0 382.38,229.4 382.38,213.5 382.38,261.4 382.38,219.0 382.62,218.4 382.62,198.2 382.62,251.2 382.62,234.9 382.88,206.2 382.88,202.2 382.88,326.7 382.88,217.5 383.12,256.2 383.12,207.0 383.12,395.9 383.12,216.3 383.38,217.6 383.38,216.0 383.38,285.1 383.38,216.0 383.62,250.3 383.62,210.6 383.62,301.8 383.62,222.9 383.88,243.8 383.88,246.2 383.88,190.7 383.88,234.8 384.12,235.8 384.12,210.9 384.12,284.3 384.12,246.8 384.38,228.0 384.38,214.2 384.38,299.8 384.38,214.9 384.62,263.5 384.62,284.1 384.62,202.8 384.62,206.4 384.88,235.7 384.88,201.4 384.88,273.5 384.88,201.4 385.12,214.8 385.12,206.7 385.12,295.9 385.12,230.3 385.38,217.5 385.38,207.7 385.38,293.6 385.38,269.7 385.62,253.0 385.62,203.9 385.62,363.8 385.62,218.7 385.88,212.5 385.88,208.9 385.88,257.1 385.88,255.6 386.12,281.1 386.12,323.0 386.12,200.1 386.12,239.2 386.38,218.6 386.38,201.8 386.38,279.5 386.38,212.5 386.62,313.8 386.62,320.0 386.62,208.4 386.62,286.9 386.88,214.0 386.88,198.9 386.88,289.3 386.88,250.2 387.12,215.5 387.12,186.2 387.12,267.0 387.12,267.0 387.38,220.3 387.38,199.6 387.38,376.2 387.38,216.1 387.62,224.2 387.62,208.4 387.62,260.5 387.62,220.5 387.88,215.4 387.88,213.0 387.88,260.0 387.88,238.3 388.12,250.8 388.12,270.0 388.12,209.7 388.12,240.5 388.38,239.5 388.38,201.9 388.38,308.4 388.38,217.9 388.62,215.9 388.62,204.5 388.62,338.4 388.62,204.5 388.88,289.3 388.88,289.3 388.88,206.7 388.88,235.0 389.12,277.5 389.12,300.7 389.12,207.5 389.12,216.9 389.38,231.1 389.38,202.7 389.38,277.6 389.38,249.1 389.62,255.6 389.62,255.6 389.62,206.2 389.62,217.8 389.88,250.2 389.88,297.8 389.88,192.4 389.88,252.1 390.12,238.6 390.12,211.9 390.12,307.4 390.12,263.5 390.38,235.1 390.38,197.2 390.38,297.4 390.38,227.0 390.62,255.1 390.62,299.3 390.62,197.3 390.62,217.7 390.88,287.2 390.88,290.6 390.88,216.4 390.88,237.6 391.12,219.9 391.12,212.5 391.12,300.3 391.12,212.5 391.38,273.7 391.38,295.2 391.38,207.6 391.38,209.6 391.62,277.0 391.62,299.5 391.62,213.4 391.62,299.5 391.88,214.9 391.88,213.2 391.88,279.9 391.88,217.3 392.12,218.2 392.12,211.6 392.12,305.0 392.12,243.7 392.38,218.1 392.38,204.9 392.38,259.7 392.38,232.2 392.62,213.5 392.62,206.6 392.62,289.6 392.62,227.0 392.88,239.6 392.88,198.0 392.88,334.8 392.88,198.0 393.12,224.8 393.12,202.3 393.12,352.9 393.12,241.5 393.38,222.3 393.38,198.8 393.38,283.0 393.38,230.4 393.62,230.7 393.62,270.6 393.62,173.3 393.62,214.2 393.88,215.0 393.88,206.2 393.88,361.4 393.88,215.7 394.12,266.9 394.12,297.1 394.12,197.6 394.12,297.1 394.38,281.1 394.38,327.0 394.38,200.4 394.38,212.6 394.62,230.8 394.62,204.3 394.62,275.2 394.62,252.3 394.88,226.2 394.88,212.4 394.88,313.1 394.88,252.9 395.12,207.3 395.12,202.8 395.12,348.4 395.12,223.9 395.38,230.8 395.38,208.1 395.38,322.7 395.38,265.3 395.62,228.8 395.62,203.8 395.62,266.8 395.62,242.3 395.88,210.1 395.88,210.1 395.88,285.1 395.88,259.4 396.12,210.4 396.12,195.4 396.12,354.9 396.12,242.3 396.38,207.0 396.38,207.0 396.38,310.9 396.38,207.2 396.62,222.4 396.62,201.4 396.62,294.8 396.62,249.6 396.88,245.1 396.88,278.6 396.88,209.3 396.88,238.9 397.12,216.9 397.12,210.8 397.12,330.8 397.12,223.9 397.38,295.2 397.38,295.2 397.38,170.3 397.38,217.2 397.62,214.2 397.62,201.3 397.62,309.6 397.62,275.4 397.88,284.7 397.88,284.7 397.88,206.5 397.88,277.7 398.12,254.1 398.12,277.8 398.12,205.0 398.12,213.7 398.38,211.3 398.38,203.9 398.38,352.1 398.38,276.7 398.62,213.2 398.62,199.0 398.62,319.5 398.62,266.2 398.88,233.6 398.88,204.1 398.88,296.7 398.88,295.3 399.12,226.9 399.12,202.3 399.12,316.9 399.12,214.5 399.38,211.7 399.38,200.6 399.38,382.2 399.38,230.4 399.62,227.6 399.62,207.0 399.62,322.4 399.62,207.7 399.88,230.6 399.88,184.6 399.88,312.7 399.88,215.1 400.12,207.0 400.12,207.0 400.12,313.8 400.12,297.9 400.38,224.7 400.38,212.7 400.38,328.6 400.38,217.3 400.62,213.7 400.62,209.7 400.62,273.3 400.62,209.7 400.88,237.5 400.88,205.6 400.88,320.2 400.88,205.6 401.12,215.8 401.12,201.4 401.12,350.4 401.12,201.4 401.38,298.4 401.38,298.4 401.38,210.7 401.38,210.9 401.62,229.0 401.62,212.8 401.62,325.3 401.62,279.9 401.88,233.6 401.88,198.8 401.88,338.5 401.88,246.3 402.12,224.2 402.12,203.3 402.12,286.1 402.12,286.1 402.38,214.5 402.38,208.5 402.38,360.9 402.38,360.9 402.62,210.7 402.62,199.3 402.62,260.3 402.62,241.1 402.88,234.9 402.88,205.9 402.88,338.9 402.88,212.8 403.12,229.4 403.12,203.2 403.12,352.8 403.12,221.8 403.38,247.6 403.38,198.6 403.38,315.3 403.38,211.0 403.62,208.4 403.62,175.4 403.62,349.3 403.62,295.8 403.88,207.8 403.88,196.6 403.88,311.9 403.88,222.9 404.12,219.6 404.12,205.6 404.12,310.5 404.12,222.9 404.38,212.7 404.38,203.4 404.38,350.0 404.38,217.4 404.62,312.6 404.62,320.5 404.62,203.5 404.62,210.1 404.88,281.0 404.88,326.3 404.88,202.0 404.88,219.6 405.12,235.8 405.12,199.4 405.12,329.8 405.12,249.6 405.38,200.0 405.38,200.0 405.38,295.2 405.38,216.0 405.62,212.4 405.62,208.1 405.62,290.0 405.62,237.7 405.88,205.5 405.88,203.6 405.88,307.9 405.88,214.6 406.12,243.1 406.12,202.5 406.12,319.8 406.12,246.8 406.38,294.9 406.38,200.3 406.38,398.3 406.38,253.2 406.62,243.1 406.62,201.2 406.62,297.7 406.62,297.7 406.88,239.7 406.88,198.7 406.88,282.8 406.88,238.8 407.12,224.9 407.12,203.1 407.12,306.6 407.12,211.8 407.38,269.9 407.38,269.9 407.38,178.3 407.38,216.9 407.62,219.9 407.62,204.7 407.62,318.6 407.62,237.3 407.88,280.7 407.88,208.5 407.88,365.0 407.88,258.8 408.12,266.2 408.12,288.0 408.12,204.2 408.12,210.5 408.38,217.5 408.38,193.5 408.38,279.6 408.38,279.6 408.62,211.4 408.62,202.9 408.62,321.4 408.62,251.1 408.88,198.5 408.88,198.4 408.88,316.1 408.88,235.2 409.12,285.6 409.12,318.4 409.12,192.0 409.12,207.3 409.38,211.0 409.38,202.2 409.38,280.3 409.38,203.5 409.62,202.0 409.62,197.2 409.62,294.6 409.62,210.2 409.88,246.5 409.88,206.4 409.88,330.2 409.88,206.4 410.12,220.5 410.12,205.5 410.12,262.9 410.12,212.2 410.38,209.6 410.38,199.8 410.38,389.5 410.38,227.7 410.62,224.9 410.62,195.5 410.62,319.5 410.62,219.3 410.88,211.6 410.88,200.7 410.88,303.1 410.88,227.0 411.12,229.2 411.12,203.4 411.12,312.3 411.12,212.4 411.38,214.6 411.38,208.2 411.38,278.4 411.38,265.6 411.62,219.6 411.62,210.8 411.62,275.7 411.62,242.0 411.88,225.7 411.88,195.8 411.88,296.5 411.88,228.6 412.12,233.6 412.12,198.8 412.12,284.5 412.12,198.9 412.38,210.5 412.38,182.4 412.38,332.3 412.38,242.8 412.62,269.5 412.62,281.0 412.62,210.4 412.62,248.8 412.88,217.0 412.88,201.4 412.88,288.7 412.88,228.3 413.12,277.1 413.12,324.7 413.12,206.6 413.12,276.6 413.38,285.8 413.38,296.8 413.38,196.2 413.38,216.9 413.62,311.6 413.62,311.6 413.62,209.5 413.62,238.6 413.88,296.6 413.88,296.6 413.88,198.7 413.88,215.9 414.12,200.3 414.12,200.3 414.12,298.6 414.12,215.1 414.38,298.2 414.38,298.2 414.38,207.4 414.38,210.3 414.62,296.1 414.62,296.1 414.62,211.7 414.62,229.9 414.88,214.2 414.88,178.6 414.88,271.7 414.88,253.3 415.12,212.8 415.12,202.4 415.12,276.0 415.12,217.3 415.38,201.9 415.38,201.2 415.38,293.3 415.38,252.4 415.62,217.4 415.62,207.2 415.62,288.9 415.62,216.1 415.88,261.4 415.88,197.8 415.88,338.4 415.88,224.9 416.12,211.3 416.12,196.6 416.12,284.1 416.12,232.0 416.38,220.9 416.38,207.7 416.38,295.7 416.38,217.0 416.62,254.8 416.62,198.6 416.62,330.7 416.62,205.4 416.88,214.9 416.88,205.7 416.88,290.0 416.88,290.0 417.12,217.2 417.12,209.4 417.12,340.5 417.12,219.2 417.38,240.5 417.38,214.8 417.38,287.6 417.38,214.8 417.62,226.6 417.62,209.3 417.62,297.9 417.62,262.3 417.88,232.4 417.88,202.9 417.88,288.6 417.88,264.8 418.12,233.9 418.12,200.7 418.12,279.4 418.12,279.4 418.38,221.3 418.38,196.8 418.38,277.7 418.38,214.3 418.62,191.5 418.62,191.5 418.62,307.3 418.62,215.3 418.88,244.9 418.88,199.8 418.88,309.7 418.88,224.2 419.12,294.0 419.12,294.0 419.12,198.4 419.12,213.3 419.38,227.7 419.38,193.0 419.38,305.0 419.38,232.1 419.62,388.6 419.62,388.6 419.62,204.5 419.62,216.4 419.88,211.9 419.88,194.9 419.88,305.0 419.88,209.4 420.12,251.2 420.12,203.7 420.12,310.6 420.12,242.0 420.38,247.3 420.38,278.4 420.38,208.7 420.38,210.4 420.62,367.9 420.62,367.9 420.62,202.1 420.62,247.7 420.88,219.7 420.88,204.9 420.88,328.9 420.88,216.8 421.12,267.2 421.12,206.7 421.12,372.8 421.12,249.7 421.38,269.4 421.38,198.6 421.38,351.8 421.38,216.9 421.62,200.8 421.62,199.5 421.62,294.7 421.62,266.8 421.88,262.4 421.88,286.3 421.88,199.7 421.88,217.8 422.12,242.2 422.12,199.0 422.12,289.8 422.12,216.9 422.38,329.9 422.38,397.7 422.38,198.2 422.38,242.0 422.62,224.5 422.62,204.2 422.62,301.7 422.62,216.1 422.88,216.7 422.88,196.4 422.88,366.4 422.88,306.9 423.12,231.7 423.12,203.8 423.12,290.2 423.12,238.2 423.38,312.1 423.38,365.1 423.38,206.4 423.38,211.9 423.62,243.0 423.62,301.7 423.62,180.2 423.62,215.3 423.88,281.6 423.88,320.1 423.88,197.8 423.88,204.8 424.12,278.5 424.12,199.4 424.12,423.3 424.12,219.7 424.38,228.2 424.38,197.9 424.38,306.6 424.38,258.3 424.62,217.8 424.62,199.6 424.62,325.1 424.62,238.4 424.88,225.2 424.88,207.9 424.88,281.8 424.88,258.1 425.12,230.2 425.12,201.0 425.12,400.2 425.12,400.2 425.38,208.4 425.38,206.7 425.38,329.8 425.38,240.2 425.62,243.5 425.62,208.4 425.62,286.2 425.62,210.1 425.88,207.6 425.88,207.6 425.88,350.1 425.88,241.8 426.12,220.7 426.12,204.0 426.12,310.9 426.12,204.0 426.38,227.7 426.38,269.8 426.38,183.2 426.38,212.8 426.62,217.8 426.62,199.8 426.62,363.1 426.62,217.1 426.88,213.6 426.88,200.2 426.88,323.6 426.88,210.7 427.12,204.3 427.12,199.4 427.12,324.2 427.12,254.2 427.38,239.6 427.38,199.4 427.38,297.6 427.38,221.7 427.62,212.5 427.62,199.7 427.62,328.2 427.62,228.5 427.88,218.5 427.88,197.2 427.88,311.7 427.88,233.9 428.12,231.8 428.12,198.4 428.12,311.5 428.12,232.9 428.38,216.4 428.38,207.8 428.38,340.0 428.38,256.7 428.62,199.1 428.62,199.1 428.62,313.3 428.62,256.7 428.88,257.3 428.88,172.4 428.88,406.5 428.88,214.9 429.12,209.9 429.12,207.8 429.12,329.1 429.12,219.0 429.38,211.4 429.38,203.7 429.38,330.7 429.38,211.5 429.62,240.8 429.62,201.6 429.62,337.1 429.62,210.5 429.88,222.1 429.88,197.3 429.88,335.7 429.88,281.2 430.12,217.7 430.12,195.5 430.12,305.1 430.12,227.6 430.38,213.9 430.38,199.4 430.38,435.2 430.38,270.7 430.62,216.5 430.62,200.4 430.62,333.4 430.62,234.9 430.88,249.0 430.88,199.9 430.88,345.9 430.88,228.9 431.12,216.6 431.12,199.4 431.12,294.4 431.12,252.0 431.38,223.0 431.38,208.6 431.38,319.5 431.38,265.6 431.62,239.0 431.62,208.9 431.62,322.5 431.62,220.8 431.88,211.2 431.88,208.8 431.88,307.7 431.88,294.4 432.12,266.7 432.12,308.3 432.12,210.2 432.12,299.7 432.38,231.3 432.38,210.0 432.38,296.2 432.38,279.4 432.62,290.0 432.62,290.0 432.62,208.2 432.62,239.4 432.88,215.1 432.88,201.8 432.88,285.3 432.88,239.8 433.12,211.9 433.12,199.7 433.12,369.9 433.12,369.9 433.38,246.5 433.38,199.2 433.38,310.7 433.38,199.7 433.62,253.6 433.62,286.0 433.62,206.2 433.62,216.3 433.88,247.8 433.88,177.4 433.88,320.5 433.88,217.0 434.12,286.7 434.12,334.9 434.12,200.3 434.12,236.6 434.38,212.3 434.38,205.2 434.38,295.8 434.38,248.3 434.62,245.0 434.62,207.5 434.62,326.6 434.62,247.2 434.88,205.9 434.88,199.1 434.88,447.7 434.88,272.0 435.12,212.5 435.12,202.9 435.12,292.3 435.12,278.9 435.38,240.1 435.38,203.2 435.38,329.7 435.38,245.9 435.62,220.3 435.62,199.3 435.62,327.3 435.62,229.8 435.88,263.9 435.88,198.8 435.88,393.8 435.88,214.1 436.12,217.6 436.12,207.7 436.12,315.1 436.12,264.5 436.38,223.0 436.38,205.9 436.38,316.8 436.38,208.3 436.62,295.5 436.62,343.3 436.62,198.8 436.62,301.1 436.88,200.2 436.88,198.2 436.88,275.7 436.88,257.8 437.12,220.0 437.12,200.0 437.12,317.3 437.12,224.1 437.38,282.9 437.38,334.3 437.38,203.3 437.38,204.4 437.62,188.2 437.62,188.2 437.62,343.4 437.62,220.3 437.88,218.8 437.88,205.5 437.88,391.5 437.88,391.5 438.12,212.9 438.12,206.7 438.12,374.0 438.12,256.8 438.38,239.7 438.38,212.6 438.38,308.5 438.38,282.0 438.62,253.8 438.62,288.6 438.62,187.9 438.62,280.7 438.88,239.8 438.88,207.5 438.88,333.3 438.88,284.8 439.12,243.2 439.12,204.8 439.12,306.6 439.12,227.6 439.38,218.3 439.38,212.9 439.38,327.6 439.38,224.8 439.62,307.4 439.62,307.4 439.62,209.9 439.62,220.7 439.88,221.4 439.88,213.0 439.88,334.1 439.88,215.1 440.12,221.9 440.12,212.3 440.12,284.5 440.12,227.0 440.38,211.8 440.38,208.9 440.38,334.3 440.38,208.9 440.62,249.2 440.62,213.6 440.62,363.6 440.62,217.4 440.88,221.0 440.88,204.2 440.88,327.1 440.88,232.6 441.12,240.3 441.12,203.1 441.12,392.4 441.12,281.7 441.38,214.0 441.38,203.9 441.38,395.1 441.38,303.1 441.62,290.6 441.62,346.0 441.62,205.6 441.62,291.4 441.88,221.5 441.88,200.3 441.88,333.2 441.88,233.3 442.12,209.2 442.12,192.8 442.12,287.6 442.12,217.4 442.38,248.1 442.38,207.0 442.38,290.9 442.38,259.3 442.62,266.0 442.62,209.2 442.62,333.1 442.62,219.1 442.88,235.9 442.88,208.7 442.88,475.0 442.88,218.5 443.12,214.1 443.12,206.8 443.12,318.2 443.12,240.2 443.38,241.1 443.38,203.4 443.38,303.5 443.38,251.1 443.62,247.5 443.62,289.0 443.62,202.2 443.62,222.3 443.88,208.5 443.88,202.7 443.88,339.8 443.88,317.4 444.12,238.2 444.12,195.8 444.12,309.8 444.12,220.9 444.38,231.5 444.38,202.0 444.38,282.4 444.38,228.1 444.62,252.6 444.62,202.2 444.62,407.7 444.62,238.3 444.88,208.3 444.88,207.5 444.88,347.6 444.88,260.0 445.12,194.8 445.12,194.8 445.12,414.7 445.12,209.4 445.38,235.1 445.38,203.9 445.38,380.0 445.38,225.4 445.62,242.9 445.62,202.4 445.62,396.2 445.62,220.9 445.88,251.5 445.88,206.3 445.88,315.1 445.88,240.3 446.12,351.9 446.12,351.9 446.12,197.3 446.12,228.3 446.38,283.4 446.38,337.8 446.38,198.9 446.38,274.9 446.62,236.1 446.62,198.7 446.62,442.5 446.62,223.3 446.88,296.0 446.88,362.8 446.88,203.4 446.88,207.4 447.12,293.0 447.12,205.1 447.12,447.5 447.12,244.3 447.38,285.2 447.38,196.1 447.38,413.2 447.38,229.6 447.62,219.1 447.62,208.6 447.62,401.4 447.62,218.4 447.88,224.9 447.88,191.8 447.88,390.8 447.88,332.4 448.12,241.5 448.12,209.0 448.12,352.9 448.12,221.5 448.38,203.9 448.38,200.5 448.38,351.8 448.38,214.2 448.62,220.1 448.62,214.3 448.62,355.4 448.62,270.9 448.88,244.3 448.88,204.4 448.88,312.9 448.88,261.4 449.12,295.4 449.12,295.4 449.12,204.2 449.12,227.1 449.38,260.4 449.38,204.3 449.38,376.0 449.38,222.2 449.62,302.9 449.62,332.0 449.62,204.2 449.62,214.2 449.88,292.5 449.88,298.6 449.88,203.1 449.88,267.5 450.12,209.3 450.12,203.9 450.12,347.4 450.12,347.4 450.38,216.8 450.38,201.0 450.38,367.3 450.38,215.8 450.62,246.8 450.62,211.2 450.62,351.2 450.62,272.1 450.88,220.4 450.88,205.4 450.88,372.5 450.88,220.6 451.12,227.6 451.12,202.7 451.12,379.9 451.12,221.4 451.38,218.8 451.38,207.3 451.38,396.7 451.38,223.9 451.62,194.8 451.62,194.8 451.62,307.8 451.62,222.0 451.88,203.3 451.88,201.9 451.88,305.0 451.88,228.2 452.12,271.0 452.12,201.4 452.12,353.2 452.12,201.4 452.38,221.2 452.38,202.4 452.38,443.3 452.38,302.7 452.62,364.5 452.62,364.5 452.62,209.5 452.62,223.0 452.88,230.8 452.88,212.3 452.88,351.3 452.88,262.5 453.12,221.6 453.12,204.6 453.12,326.5 453.12,232.8 453.38,318.7 453.38,318.7 453.38,209.6 453.38,240.8 453.62,278.3 453.62,336.5 453.62,202.8 453.62,240.8 453.88,223.3 453.88,207.3 453.88,333.6 453.88,223.1 454.12,224.3 454.12,205.5 454.12,294.9 454.12,222.8 454.38,342.0 454.38,342.0 454.38,206.5 454.38,299.2 454.62,221.0 454.62,209.4 454.62,388.1 454.62,228.7 454.88,263.5 454.88,312.6 454.88,193.8 454.88,256.2 455.12,229.8 455.12,200.1 455.12,343.7 455.12,246.8 455.38,224.9 455.38,206.5 455.38,320.2 455.38,320.2 455.62,284.2 455.62,335.3 455.62,212.9 455.62,256.7 455.88,219.2 455.88,210.2 455.88,301.5 455.88,242.7 456.12,224.0 456.12,208.8 456.12,323.1 456.12,215.6 456.38,205.1 456.38,204.5 456.38,338.9 456.38,216.4 456.62,227.3 456.62,206.1 456.62,337.5 456.62,283.6 456.88,235.5 456.88,206.6 456.88,305.1 456.88,266.7 457.12,213.7 457.12,207.3 457.12,382.3 457.12,251.0 457.38,236.6 457.38,209.0 457.38,344.0 457.38,233.2 457.62,192.8 457.62,192.8 457.62,309.2 457.62,283.0 457.88,220.7 457.88,212.7 457.88,315.6 457.88,294.5 458.12,229.8 458.12,206.2 458.12,412.6 458.12,206.4 458.38,217.6 458.38,204.5 458.38,417.3 458.38,257.9 458.62,214.2 458.62,213.8 458.62,319.1 458.62,233.8 458.88,244.9 458.88,213.5 458.88,317.3 458.88,222.7 459.12,347.6 459.12,376.7 459.12,213.1 459.12,213.5 459.38,215.9 459.38,212.4 459.38,385.1 459.38,221.3 459.62,225.7 459.62,214.1 459.62,318.4 459.62,232.2 459.88,263.6 459.88,292.2 459.88,212.4 459.88,221.8 460.12,225.5 460.12,206.9 460.12,368.6 460.12,261.4 460.38,241.7 460.38,206.8 460.38,396.2 460.38,265.3 460.62,247.3 460.62,212.3 460.62,308.0 460.62,223.1 460.88,241.9 460.88,190.8 460.88,360.8 460.88,248.2 461.12,281.8 461.12,356.3 461.12,205.1 461.12,240.1 461.38,209.5 461.38,209.5 461.38,288.1 461.38,225.5 461.62,224.6 461.62,206.0 461.62,316.4 461.62,222.6 461.88,221.0 461.88,210.9 461.88,352.5 461.88,259.3 462.12,266.6 462.12,206.0 462.12,338.0 462.12,217.6 462.38,227.3 462.38,207.1 462.38,381.4 462.38,242.7 462.62,309.3 462.62,371.0 462.62,212.9 462.62,233.8 462.88,252.3 462.88,206.0 462.88,340.6 462.88,248.1 463.12,238.4 463.12,218.2 463.12,354.2 463.12,259.0 463.38,250.9 463.38,207.5 463.38,365.4 463.38,227.3 463.62,273.4 463.62,205.9 463.62,341.4 463.62,288.5 463.88,328.1 463.88,328.1 463.88,205.9 463.88,272.1 464.12,248.0 464.12,212.0 464.12,333.2 464.12,219.6 464.38,253.3 464.38,212.5 464.38,318.1 464.38,220.6 464.62,221.7 464.62,211.7 464.62,355.4 464.62,221.6 464.88,247.6 464.88,209.0 464.88,403.4 464.88,403.4 465.12,238.3 465.12,207.1 465.12,318.9 465.12,212.7 465.38,244.2 465.38,202.3 465.38,327.6 465.38,279.5 465.62,323.1 465.62,350.9 465.62,207.7 465.62,264.8 465.88,228.0 465.88,205.2 465.88,353.3 465.88,242.5 466.12,426.3 466.12,426.3 466.12,182.5 466.12,224.6 466.38,223.4 466.38,206.2 466.38,370.1 466.38,228.7 466.62,237.3 466.62,208.0 466.62,364.9 466.62,233.4 466.88,217.0 466.88,202.2 466.88,419.4 466.88,242.5 467.12,275.5 467.12,206.9 467.12,355.1 467.12,214.8 467.38,284.2 467.38,207.8 467.38,410.6 467.38,250.3 467.62,216.3 467.62,208.6 467.62,353.6 467.62,228.6 467.88,282.4 467.88,345.0 467.88,209.6 467.88,245.5 468.12,256.6 468.12,212.4 468.12,372.4 468.12,221.1 468.38,242.2 468.38,213.9 468.38,360.0 468.38,247.9 468.62,222.6 468.62,216.1 468.62,356.2 468.62,305.0 468.88,234.9 468.88,215.8 468.88,412.8 468.88,255.6 469.12,230.4 469.12,214.1 469.12,322.6 469.12,322.6 469.38,243.8 469.38,193.8 469.38,335.5 469.38,221.2 469.62,229.5 469.62,211.3 469.62,354.8 469.62,225.6 469.88,285.3 469.88,335.8 469.88,208.1 469.88,222.5 470.12,239.5 470.12,208.0 470.12,371.6 470.12,230.5 470.38,299.3 470.38,388.2 470.38,203.7 470.38,235.8 470.62,219.7 470.62,209.0 470.62,366.3 470.62,238.5 470.88,226.3 470.88,212.8 470.88,465.2 470.88,288.2 471.12,266.4 471.12,206.3 471.12,369.6 471.12,240.9 471.38,253.7 471.38,208.1 471.38,390.1 471.38,280.8 471.62,226.2 471.62,204.2 471.62,353.1 471.62,292.7 471.88,251.6 471.88,203.9 471.88,347.2 471.88,225.7 472.12,229.7 472.12,189.3 472.12,338.5 472.12,278.2 472.38,233.7 472.38,207.4 472.38,342.6 472.38,230.0 472.62,299.7 472.62,335.8 472.62,209.7 472.62,271.6 472.88,241.6 472.88,206.7 472.88,354.2 472.88,245.7 473.12,315.2 473.12,407.8 473.12,210.7 473.12,226.5 473.38,251.0 473.38,210.2 473.38,379.7 473.38,339.9 473.62,246.9 473.62,209.5 473.62,392.8 473.62,249.0 473.88,278.3 473.88,317.1 473.88,208.9 473.88,226.1 474.12,270.1 474.12,211.2 474.12,370.3 474.12,228.3 474.38,327.0 474.38,356.9 474.38,215.9 474.38,216.7 474.62,282.2 474.62,217.8 474.62,348.1 474.62,236.7 474.88,274.2 474.88,222.9 474.88,364.7 474.88,224.2 475.12,238.0 475.12,195.2 475.12,328.3 475.12,270.7 475.38,310.2 475.38,228.9 475.38,439.7 475.38,309.8 475.62,270.7 475.62,228.3 475.62,364.6 475.62,250.9 475.88,290.4 475.88,224.6 475.88,475.0 475.88,242.3 476.12,260.2 476.12,220.2 476.12,375.2 476.12,303.0 476.38,236.9 476.38,217.8 476.38,459.1 476.38,280.5 476.62,245.4 476.62,221.3 476.62,348.3 476.62,224.8 476.88,263.5 476.88,221.7 476.88,357.5 476.88,227.9 477.12,292.1 477.12,357.1 477.12,211.6 477.12,235.0 477.38,256.5 477.38,215.1 477.38,394.8 477.38,272.4 477.62,246.4 477.62,221.1 477.62,403.6 477.62,278.4 477.88,287.8 477.88,350.3 477.88,214.7 477.88,286.9 478.12,231.8 478.12,222.7 478.12,342.4 478.12,274.9 478.38,292.0 478.38,209.2 478.38,375.7 478.38,233.2 478.62,254.6 478.62,214.8 478.62,344.5 478.62,245.0 478.88,245.6 478.88,212.7 478.88,352.7 478.88,301.7 479.12,246.8 479.12,216.2 479.12,439.4 479.12,233.6 479.38,224.5 479.38,215.6 479.38,349.4 479.38,237.6 479.62,332.6 479.62,373.7 479.62,208.7 479.62,278.1 479.88,240.9 479.88,221.1 479.88,383.5 479.88,239.7 480.12,277.3 480.12,215.1 480.12,454.8 480.12,237.0 480.38,247.6 480.38,216.2 480.38,381.4 480.38,241.2 480.62,240.5 480.62,214.3 480.62,338.6 480.62,258.0 480.88,266.9 480.88,226.9 480.88,402.5 480.88,233.1 481.12,266.7 481.12,214.4 481.12,475.0 481.12,256.6 481.38,300.4 481.38,360.3 481.38,224.8 481.38,261.5 481.62,276.9 481.62,225.0 481.62,334.4 481.62,262.3 481.88,333.4 481.88,373.5 481.88,223.1 481.88,276.4 482.12,261.7 482.12,223.0 482.12,370.7 482.12,299.0 482.38,267.9 482.38,224.0 482.38,349.2 482.38,233.3 482.62,225.7 482.62,223.9 482.62,362.4 482.62,237.4 482.88,265.3 482.88,218.4 482.88,353.1 482.88,231.7 483.12,238.2 483.12,214.9 483.12,427.0 483.12,229.9 483.38,243.2 483.38,224.4 483.38,353.7 483.38,269.1 483.62,252.0 483.62,226.1 483.62,341.8 483.62,259.3 483.88,242.5 483.88,220.4 483.88,381.3 483.88,263.2 484.12,298.3 484.12,347.6 484.12,219.0 484.12,329.0 484.38,243.1 484.38,207.7 484.38,348.7 484.38,236.5 484.62,255.3 484.62,227.1 484.62,373.9 484.62,251.6 484.88,258.4 484.88,214.3 484.88,390.5 484.88,261.4 485.12,280.5 485.12,342.1 485.12,217.8 485.12,244.8 485.38,251.2 485.38,219.5 485.38,386.8 485.38,250.6 485.62,246.7 485.62,222.9 485.62,444.8 485.62,297.0 485.88,292.1 485.88,360.7 485.88,220.1 485.88,301.6 486.12,240.9 486.12,227.0 486.12,475.0 486.12,397.3 486.38,244.2 486.38,222.8 486.38,394.7 486.38,292.6 486.62,244.4 486.62,212.2 486.62,407.7 486.62,289.8 486.88,253.7 486.88,220.4 486.88,395.4 486.88,220.4 487.12,243.5 487.12,221.9 487.12,374.8 487.12,328.8 487.38,266.7 487.38,223.1 487.38,360.1 487.38,315.3 487.62,309.5 487.62,228.3 487.62,418.0 487.62,243.0 487.88,257.0 487.88,226.2 487.88,405.1 487.88,330.9 488.12,264.8 488.12,227.4 488.12,434.2 488.12,251.6 488.38,265.0 488.38,228.1 488.38,400.1 488.38,328.7 488.62,334.3 488.62,346.2 488.62,214.7 488.62,271.3 488.88,293.7 488.88,227.3 488.88,457.4 488.88,273.8 489.12,247.4 489.12,226.8 489.12,456.4 489.12,269.6 489.38,303.2 489.38,226.0 489.38,475.0 489.38,263.1 489.62,254.0 489.62,223.4 489.62,400.6 489.62,260.6 489.88,243.8 489.88,227.5 489.88,445.1 489.88,259.4 490.12,311.6 490.12,225.2 490.12,449.1 490.12,255.9 490.38,234.3 490.38,226.5 490.38,475.0 490.38,243.9 490.62,312.9 490.62,351.4 490.62,234.4 490.62,274.4 490.88,255.8 490.88,230.3 490.88,475.0 490.88,318.3 491.12,276.7 491.12,226.2 491.12,388.6 491.12,253.5 491.38,278.7 491.38,226.1 491.38,406.4 491.38,274.9 491.62,243.5 491.62,230.1 491.62,397.2 491.62,242.0 491.88,328.0 491.88,357.3 491.88,235.6 491.88,355.3 492.12,352.1 492.12,402.0 492.12,235.1 492.12,240.3 492.38,234.9 492.38,206.7 492.38,380.9 492.38,243.0 492.62,236.1 492.62,230.4 492.62,420.7 492.62,346.6 492.88,259.4 492.88,229.9 492.88,399.8 492.88,232.1 493.12,252.5 493.12,227.0 493.12,428.0 493.12,264.6 493.38,320.7 493.38,380.4 493.38,232.2 493.38,253.7 493.62,255.4 493.62,230.4 493.62,398.5 493.62,252.1 493.88,303.5 493.88,240.6 493.88,400.9 493.88,244.0 494.12,268.2 494.12,234.1 494.12,431.2 494.12,306.5 494.38,316.2 494.38,388.7 494.38,221.7 494.38,318.3 494.62,248.3 494.62,236.8 494.62,428.8 494.62,280.8 494.88,294.4 494.88,234.0 494.88,423.8 494.88,234.0 495.12,282.2 495.12,233.8 495.12,410.6 495.12,238.7 495.38,317.0 495.38,230.8 495.38,475.0 495.38,232.4 495.62,298.0 495.62,241.6 495.62,414.3 495.62,255.3 495.88,254.6 495.88,221.4 495.88,446.6 495.88,243.8 496.12,271.9 496.12,245.4 496.12,434.9 496.12,249.0 496.38,271.5 496.38,234.9 496.38,452.1 496.38,239.7 496.62,252.5 496.62,225.3 496.62,458.1 496.62,225.3 496.88,282.1 496.88,241.7 496.88,404.6 496.88,265.9 497.12,310.8 497.12,229.9 497.12,475.0 497.12,306.0 497.38,252.9 497.38,239.1 497.38,394.7 497.38,338.8 497.62,261.4 497.62,236.2 497.62,434.1 497.62,261.4 497.88,280.5 497.88,237.8 497.88,394.2 497.88,281.6 498.12,308.0 498.12,225.6 498.12,431.5 498.12,392.7 498.38,332.2 498.38,237.4 498.38,459.7 498.38,323.1 498.62,254.0 498.62,238.3 498.62,444.0 498.62,256.0 498.88,292.3 498.88,240.8 498.88,451.2 498.88,354.8 499.12,317.7 499.12,242.0 499.12,446.1 499.12,446.1 499.38,288.9 499.38,242.2 499.38,475.0 499.38,256.9 499.62,252.5 499.62,240.6 499.62,375.4 499.62,298.2 499.88,284.9 499.88,239.2 499.88,385.9 499.88,348.7 500.12,257.8 500.12,237.1 500.12,395.6 500.12,268.2 500.38,266.9 500.38,235.2 500.38,474.3 500.38,259.5 500.62,259.2 500.62,238.1 500.62,475.0 500.62,330.2 500.88,282.9 500.88,241.4 500.88,400.4 500.88,258.4 501.12,273.9 501.12,243.4 501.12,456.8 501.12,246.5 501.38,300.0 501.38,247.2 501.38,440.3 501.38,262.0 501.62,279.0 501.62,228.6 501.62,475.0 501.62,341.8 501.88,262.0 501.88,253.5 501.88,432.8 501.88,263.6 502.12,259.6 502.12,252.4 502.12,396.8 502.12,282.7 502.38,304.5 502.38,248.9 502.38,448.1 502.38,277.9 502.62,264.4 502.62,251.1 502.62,400.9 502.62,269.3 502.88,322.6 502.88,242.7 502.88,404.4 502.88,292.8 503.12,340.0 503.12,408.1 503.12,240.3 503.12,258.1 503.38,262.4 503.38,235.3 503.38,368.9 503.38,254.7 503.62,329.9 503.62,418.6 503.62,234.9 503.62,265.7 503.88,286.3 503.88,232.7 503.88,467.6 503.88,275.7 504.12,260.2 504.12,230.6 504.12,430.3 504.12,280.2 504.38,276.3 504.38,232.0 504.38,445.3 504.38,265.9 504.62,261.0 504.62,237.5 504.62,390.2 504.62,278.3 504.88,278.8 504.88,239.4 504.88,398.8 504.88,286.3 505.12,291.1 505.12,238.7 505.12,475.0 505.12,429.2 505.38,259.9 505.38,244.8 505.38,419.0 505.38,287.1 505.62,296.8 505.62,248.5 505.62,425.2 505.62,264.2 505.88,262.3 505.88,236.0 505.88,422.6 505.88,264.7 506.12,301.6 506.12,240.5 506.12,455.9 506.12,256.5 506.38,294.5 506.38,247.0 506.38,469.4 506.38,351.1 506.62,277.0 506.62,248.5 506.62,475.0 506.62,276.4 506.88,353.5 506.88,243.6 506.88,463.6 506.88,266.4 507.12,264.5 507.12,243.2 507.12,405.6 507.12,321.2 507.38,284.8 507.38,246.6 507.38,475.0 507.38,261.4 507.62,317.4 507.62,245.2 507.62,475.0 507.62,269.6 507.88,262.3 507.88,244.2 507.88,429.4 507.88,301.6 508.12,277.4 508.12,246.1 508.12,438.3 508.12,306.4 508.38,276.9 508.38,251.0 508.38,441.7 508.38,296.5 508.62,314.5 508.62,226.6 508.62,421.2 508.62,271.7 508.88,269.2 508.88,253.2 508.88,473.4 508.88,289.7 509.12,270.0 509.12,255.1 509.12,475.0 509.12,334.3 509.38,267.1 509.38,256.9 509.38,461.5 509.38,276.5 509.62,281.6 509.62,257.5 509.62,392.7 509.62,274.1 509.88,413.6 509.88,471.3 509.88,255.8 509.88,277.3 510.12,290.5 510.12,254.4 510.12,416.3 510.12,268.6 510.38,356.3 510.38,456.2 510.38,253.1 510.38,301.1 510.62,271.1 510.62,253.8 510.62,411.1 510.62,275.9 510.88,267.0 510.88,253.7 510.88,463.9 510.88,278.6 511.12,343.5 511.12,418.3 511.12,234.6 511.12,261.8 511.38,342.6 511.38,267.9 511.38,442.6 511.38,442.6 511.62,363.5 511.62,426.9 511.62,255.5 511.62,298.2 511.88,285.9 511.88,256.4 511.88,417.7 511.88,391.1 512.12,329.8 512.12,258.6 512.12,467.2 512.12,285.5 512.38,297.0 512.38,272.8 512.38,466.8 512.38,334.2 512.62,285.2 512.62,271.9 512.62,453.5 512.62,350.8 512.88,287.3 512.88,268.1 512.88,435.3 512.88,291.2 513.12,294.0 513.12,272.7 513.12,475.0 513.12,285.8 513.38,296.2 513.38,266.7 513.38,475.0 513.38,296.8 513.62,384.7 513.62,466.2 513.62,273.4 513.62,349.6 513.88,294.3 513.88,264.7 513.88,475.0 513.88,292.4 514.12,277.9 514.12,268.4 514.12,475.0 514.12,284.6 514.38,308.8 514.38,277.7 514.38,468.1 514.38,357.8 514.62,300.7 514.62,273.7 514.62,468.3 514.62,364.3 514.88,339.2 514.88,283.3 514.88,468.9 514.88,312.3 515.12,316.0 515.12,277.4 515.12,472.4 515.12,297.1" fill="none" stroke="#000" stroke-width="0.72" stroke-linejoin="bevel"/></g></svg>
<span class="t" style="right:599.80px;top:32.70px;font-size:10.2px;line-height:10.2px;font-weight:400;color:#141414;transform-origin:100% 0;transform:rotate(0.03deg) scaleX(0.9434);">-20</span>
<span class="t" style="right:599.80px;top:94.70px;font-size:10.2px;line-height:10.2px;font-weight:400;color:#141414;transform-origin:100% 0;transform:rotate(0.03deg) scaleX(0.9434);">-30</span>
<span class="t" style="right:599.80px;top:155.70px;font-size:10.2px;line-height:10.2px;font-weight:400;color:#141414;transform-origin:100% 0;transform:rotate(0.03deg) scaleX(0.9434);">-40</span>
<span class="t" style="right:599.80px;top:217.70px;font-size:10.2px;line-height:10.2px;font-weight:400;color:#141414;transform-origin:100% 0;transform:rotate(0.03deg) scaleX(0.9434);">-50</span>
<span class="t" style="right:599.80px;top:279.70px;font-size:10.2px;line-height:10.2px;font-weight:400;color:#141414;transform-origin:100% 0;transform:rotate(0.03deg) scaleX(0.9434);">-60</span>
<span class="t" style="right:599.80px;top:340.70px;font-size:10.2px;line-height:10.2px;font-weight:400;color:#141414;transform-origin:100% 0;transform:rotate(0.03deg) scaleX(0.9434);">-70</span>
<span class="t" style="right:599.80px;top:402.70px;font-size:10.2px;line-height:10.2px;font-weight:400;color:#141414;transform-origin:100% 0;transform:rotate(0.03deg) scaleX(0.9434);">-80</span>
<span class="t" style="right:599.80px;top:464.70px;font-size:10.2px;line-height:10.2px;font-weight:400;color:#141414;transform-origin:100% 0;transform:rotate(0.03deg) scaleX(0.9434);">-90</span>
<span class="t" style="left:61.11px;top:471.95px;font-size:9.7px;line-height:9.7px;font-weight:700;color:#000;transform-origin:50% 0;transform:rotate(0.03deg) scaleX(0.9275);">10</span>
<span class="t" style="left:101.87px;top:471.95px;font-size:9.7px;line-height:9.7px;font-weight:700;color:#000;transform-origin:50% 0;transform:rotate(0.03deg) scaleX(0.9275);">20</span>
<span class="t" style="left:155.75px;top:471.95px;font-size:9.7px;line-height:9.7px;font-weight:700;color:#000;transform-origin:50% 0;transform:rotate(0.03deg) scaleX(0.9275);">50</span>
<span class="t" style="left:193.81px;top:471.95px;font-size:9.7px;line-height:9.7px;font-weight:700;color:#000;transform-origin:50% 0;transform:rotate(0.03deg) scaleX(0.9399);">100</span>
<span class="t" style="left:234.57px;top:471.95px;font-size:9.7px;line-height:9.7px;font-weight:700;color:#000;transform-origin:50% 0;transform:rotate(0.03deg) scaleX(0.9399);">200</span>
<span class="t" style="left:288.45px;top:471.95px;font-size:9.7px;line-height:9.7px;font-weight:700;color:#000;transform-origin:50% 0;transform:rotate(0.03deg) scaleX(0.9399);">500</span>
<span class="t" style="left:331.10px;top:471.95px;font-size:9.7px;line-height:9.7px;font-weight:700;color:#000;transform-origin:50% 0;transform:rotate(0.03deg) scaleX(0.8555);">1K</span>
<span class="t" style="left:371.86px;top:471.95px;font-size:9.7px;line-height:9.7px;font-weight:700;color:#000;transform-origin:50% 0;transform:rotate(0.03deg) scaleX(0.8555);">2K</span>
<span class="t" style="left:425.75px;top:471.95px;font-size:9.7px;line-height:9.7px;font-weight:700;color:#000;transform-origin:50% 0;transform:rotate(0.03deg) scaleX(0.8555);">5K</span>
<span class="t" style="left:463.81px;top:471.95px;font-size:9.7px;line-height:9.7px;font-weight:700;color:#000;transform-origin:50% 0;transform:rotate(0.03deg) scaleX(0.8773);">10K</span>
<span class="t" style="left:504.57px;top:471.95px;font-size:9.7px;line-height:9.7px;font-weight:700;color:#000;transform-origin:50% 0;transform:rotate(0.03deg) scaleX(0.8773);">20K</span>
<span class="t" style="left:258.03px;top:485.90px;font-size:8.8px;line-height:8.8px;font-weight:700;color:#000;transform-origin:50% 0;transform:rotate(0.03deg) scaleX(0.8749);">Frequency (Hz)</span>
<span class="t" style="left:27.2px;top:260.8px;font-size:10.8px;line-height:10.8px;font-weight:700;color:#000;transform-origin:0 0;transform:rotate(-90.03deg) scaleX(0.685) translateY(-9.40px)">db20</span>
</div>
</body></html>
